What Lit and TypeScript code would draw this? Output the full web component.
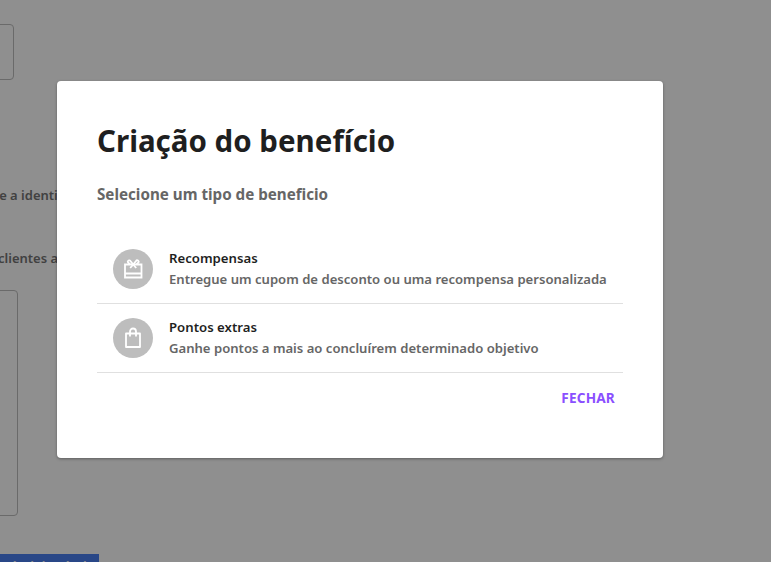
import { LitElement, html, css } from "lit";
import { customElement } from "lit/decorators.js";

@customElement("app-root")
export class AppRoot extends LitElement {
  static styles = css`
    :host { display: block; position: relative; width: 771px; height: 562px; overflow: hidden; background: #fff; font-family: "Noto Sans", sans-serif; }
    .page { height: 562px; display: flex; flex-direction: column; align-items: flex-start; padding-top: 24px; box-sizing: border-box; color: #757575; font-size: 13px; font-weight: 600; }
    .box { border: 1px solid #bdbdbd; border-radius: 4px; box-sizing: border-box; }
    .b1 { width: 114px; height: 56px; margin-left: -100px; }
    .l1 { margin: 105px 0 0 -9px; line-height: 20px; white-space: nowrap; width: 300px; }
    .l2 { margin: 43px 0 0 -2px; line-height: 20px; white-space: nowrap; width: 300px; }
    .b2 { width: 118px; height: 226px; margin: 22px 0 0 -100px; }
    .bar { width: 99px; height: 8px; margin-top: 38px; background: #4a7ff0; color: #fff; font-size: 13px; font-weight: 600; line-height: 18px; overflow: hidden; text-align: center; flex: none; padding-top: 3px; box-sizing: border-box; }
    .scrim { position: absolute; inset: 0; background: rgba(0, 0, 0, 0.44); display: flex; align-items: flex-start; justify-content: flex-start; }
    .modal { margin: 81px 0 0 57px; width: 606px; height: 377px; box-sizing: border-box; padding: 40px 40px 0; background: #fff; border-radius: 4px; box-shadow: 0 1px 3px rgba(0,0,0,.35); display: flex; flex-direction: column; }
    h1 { margin: 0; font-size: 29.5px; line-height: 40px; font-weight: 700; color: #1f1f1f; }
    .sub { margin: 23px 0 0; font-size: 15.2px; line-height: 20px; font-weight: 700; color: #666; }
    .list { margin-top: 31px; display: flex; flex-direction: column; }
    .row { height: 69px; box-sizing: border-box; display: flex; align-items: center; gap: 16px; padding: 0 16px; border-bottom: 1px solid #e0e0e0; }
    .ic { width: 40px; height: 40px; border-radius: 50%; background: #bdbdbd; display: flex; align-items: center; justify-content: center; flex: none; }
    .ic svg { width: 24px; height: 24px; display: block; fill: none; stroke: #fff; stroke-width: 1.8; }
    .tx { display: flex; flex-direction: column; gap: 3px; margin-bottom: 2px; }
    .t { font-size: 13.2px; line-height: 18px; font-weight: 600; color: #1f1f1f; }
    .d { font-size: 13.1px; line-height: 18px; font-weight: 600; color: #666; white-space: nowrap; }
    .acts { display: flex; justify-content: flex-end; padding: 15px 8px 0 0; }
    .btn { border: 0; background: none; padding: 0; font: 700 13.6px/20px "Noto Sans", sans-serif; color: #8a4fff; letter-spacing: .2px; }
  `;
  render() {
    return html`
      <div class="page">
        <div class="box b1"></div>
        <div class="l1">de a identificação dos</div>
        <div class="l2">clientes ativos</div>
        <div class="box b2"></div>
        <div class="bar">Nível de nível 5</div>
      </div>
      <div class="scrim">
        <div class="modal">
          <h1>Criação do benefício</h1>
          <p class="sub">Selecione um tipo de beneficio</p>
          <div class="list">
            <div class="row">
              <span class="ic"><svg viewBox="0 0 24 24"><path d="M4 7.500h16.500v13H4z"/><path d="M4 16.500h16.500" stroke-width="2"/><path d="M12.200 7.500 9.500 4a1.400 1.400 0 0 0-2.500 1.500L9 7.500M12.200 7.500 15 4a1.400 1.400 0 0 1 2.500 1.500l-2 2M12.200 7.500l-3 3.500M12.200 7.500l3 3.500"/></svg></span>
              <div class="tx"><span class="t">Recompensas</span><span class="d">Entregue um cupom de desconto ou uma recompensa personalizada</span></div>
            </div>
            <div class="row">
              <span class="ic"><svg viewBox="0 0 24 24"><path d="M5 7.500h14v13.500H5z" stroke-linejoin="round"/><path d="M9 10.500V5.500a3 3 0 0 1 6 0v5"/></svg></span>
              <div class="tx"><span class="t">Pontos extras</span><span class="d">Ganhe pontos a mais ao concluírem determinado objetivo</span></div>
            </div>
          </div>
          <div class="acts"><button class="btn">FECHAR</button></div>
        </div>
      </div>
    `;
  }
}
